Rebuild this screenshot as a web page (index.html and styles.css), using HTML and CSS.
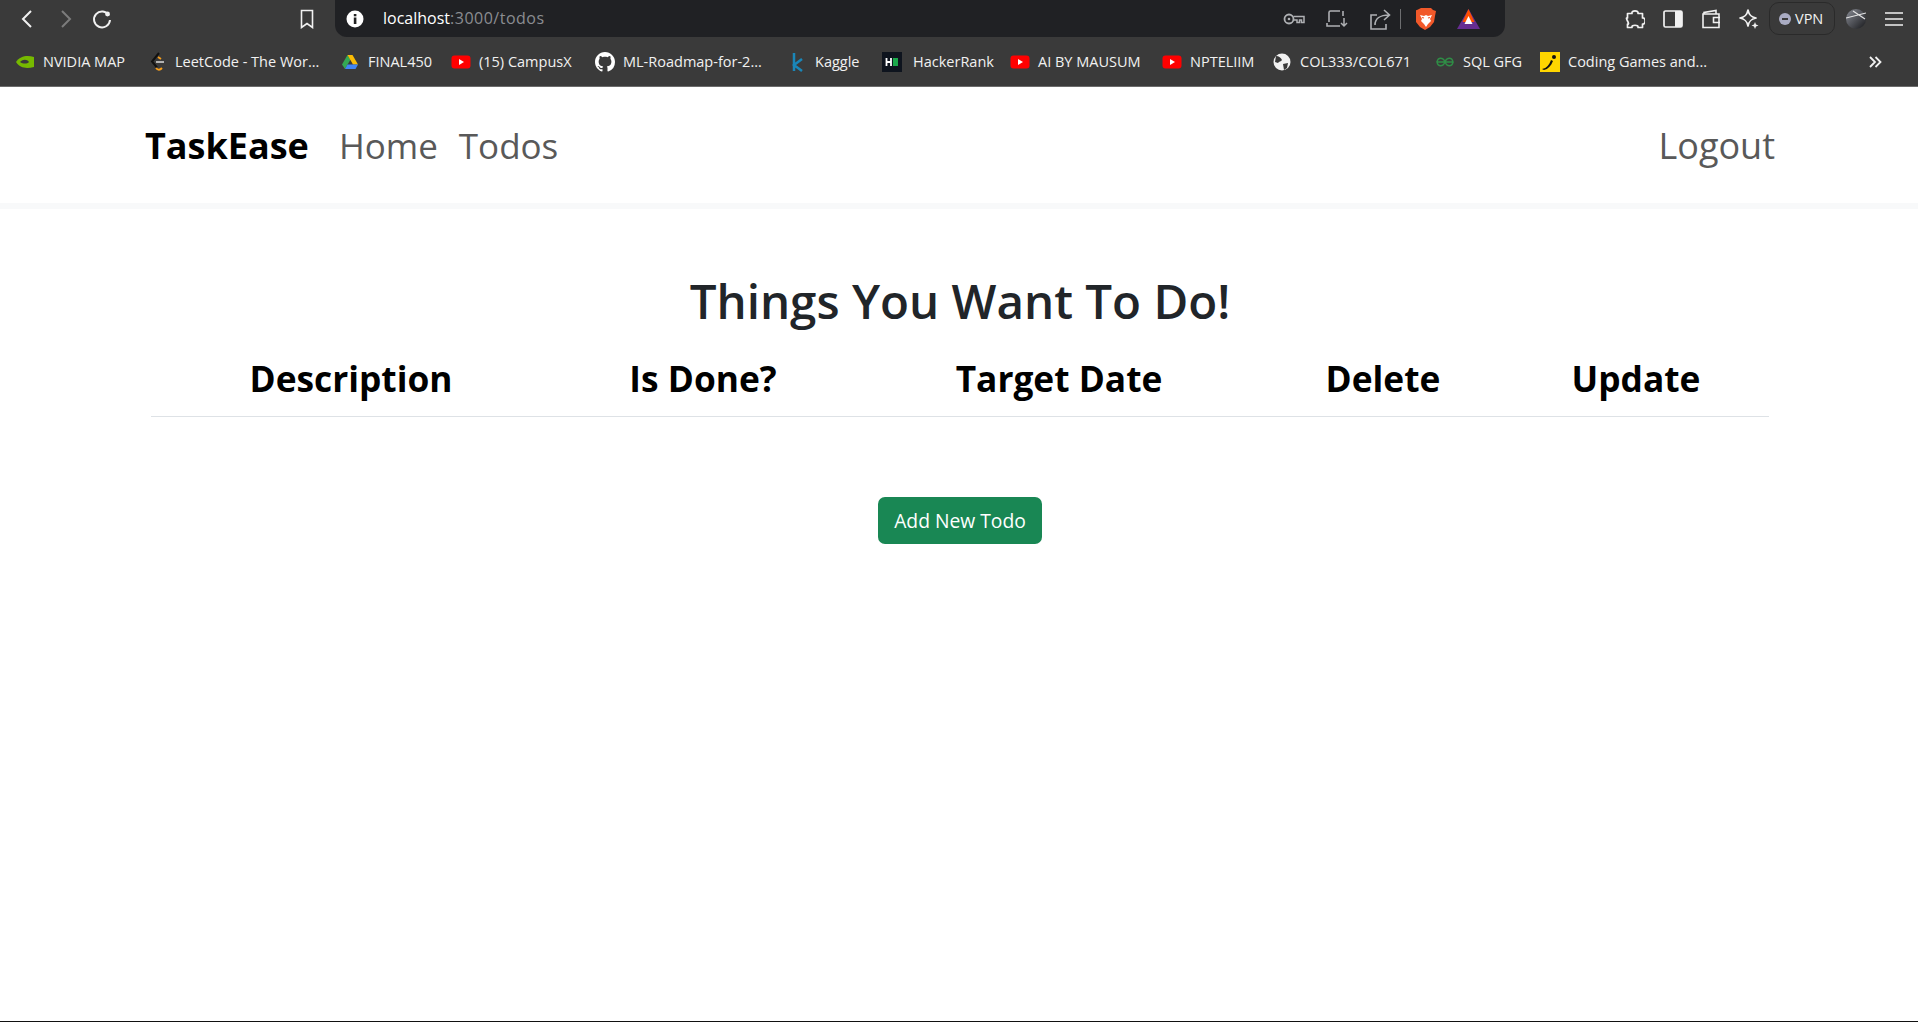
FILE: index.html

```html
<!DOCTYPE html>
<html lang="en">
<head>
    <meta charset="UTF-8">
    <title>TaskEase</title>
    <link rel="stylesheet" href="styles.css">
</head>
<body>
    <div class="browser">
        <div class="toolbar">
            <div class="nav-btns">
                <svg width="22" height="22" viewBox="0 0 22 22"><path d="M14 3 6 11l8 8" fill="none" stroke="#f1f1f1" stroke-width="2"/></svg>
                <svg width="22" height="22" viewBox="0 0 22 22"><path d="M8 3l8 8-8 8" fill="none" stroke="#7c7c7c" stroke-width="2"/></svg>
                <svg width="22" height="22" viewBox="0 0 22 22"><path d="M18 7.500a8 8 0 1 0 1 4.500" fill="none" stroke="#f1f1f1" stroke-width="2"/><circle cx="16.500" cy="6" r="2.400" fill="#f1f1f1"/></svg>
            </div>
            <svg class="bookmark" width="16" height="20" viewBox="0 0 16 20"><path d="M2.500 1.500h11v17L8 14.500l-5.500 4z" fill="none" stroke="#f1f1f1" stroke-width="1.600"/></svg>
            <div class="urlbar">
                <svg width="18" height="18" viewBox="0 0 18 18"><circle cx="9" cy="9" r="8.500" fill="#fff"/><rect x="7.800" y="7.500" width="2.600" height="6.500" fill="#222"/><rect x="7.800" y="4" width="2.600" height="2.300" fill="#222"/></svg>
                <div class="url">localhost<span class="url-rest">:3000/todos</span></div>
                <div class="url-icons">
                    <svg width="22" height="14" viewBox="0 0 22 14"><circle cx="6" cy="7" r="4.500" fill="none" stroke="#aeb0b3" stroke-width="1.800"/><circle cx="6" cy="7" r="1.300" fill="#aeb0b3"/><path d="M10.500 4.500H21v6h-2.500V8h-2v2.500H14V8h-3.500" fill="none" stroke="#aeb0b3" stroke-width="1.500"/></svg>
                    <svg width="22" height="20" viewBox="0 0 22 20"><path d="M14 2H4.500A1.500 1.500 0 0 0 3 3.500V13" fill="none" stroke="#aeb0b3" stroke-width="1.600"/><path d="M17 2v5M1 14v3h13" fill="none" stroke="#aeb0b3" stroke-width="1.600"/><path d="M18 9v8m-3-3 3 3 3-3" fill="none" stroke="#aeb0b3" stroke-width="1.500"/></svg>
                    <svg width="22" height="22" viewBox="0 0 22 22"><path d="M8 7H2v14h15v-5" fill="none" stroke="#aeb0b3" stroke-width="1.600"/><path d="M6 17c0-6 5-10 14-10m-5-5 5.500 5-5.500 5" fill="none" stroke="#aeb0b3" stroke-width="1.600"/></svg>
                    <span class="url-sep"></span>
                    <svg width="20" height="22" viewBox="0 0 20 22"><path d="M5 0h10l2 2 3 1-1 5-1 6-4 5-5 3-5-3-4-5-1-6-1-5 3-1z" fill="#f1592a"/><path d="M4 7l4 1 2-1 2 1 4-1-2 4 1 2-3 3-2 3-2-3-3-3 1-2z" fill="#fff"/><path d="M6 9.500l2 .5M14 9.500l-2 .5" stroke="#f1592a" stroke-width="1.200"/></svg>
                    <svg width="23" height="20" viewBox="0 0 23 20"><path d="M11.500 0 23 20H0z" fill="#662d91"/><path d="M11.500 0l6 13H5.500z" fill="#ff5000"/><path d="M11.500 7l4 8h-8z" fill="#fff"/></svg>
                </div>
            </div>
            <div class="tool-icons">
                <svg width="20" height="20" viewBox="0 0 20 20"><path d="M7 4.500C6 1 14 1 13 4.500h4.500V9C21 8 21 16 17.500 15v3.500H13c1-3-7-3-6 0H2.500V15c3.500 1-3.500-7 0-6V4.500z" fill="none" stroke="#f1f1f1" stroke-width="1.700" stroke-linejoin="round"/></svg>
                <svg width="20" height="20" viewBox="0 0 20 20"><rect x="1" y="2" width="18" height="16" rx="1.500" fill="none" stroke="#f1f1f1" stroke-width="1.700"/><rect x="12" y="2" width="7" height="16" fill="#f1f1f1"/></svg>
                <svg width="20" height="20" viewBox="0 0 20 20"><path d="M3 5V3.500L15 1.500V5M2 5h16v13.500H2zM19 8.500h-6.500v5H19" fill="none" stroke="#f1f1f1" stroke-width="1.600"/></svg>
                <svg width="20" height="20" viewBox="0 0 20 20"><path d="M9 1c1 5 3 7 8 8-5 1-7 3-8 8-1-5-3-7-8-8 5-1 7-3 8-8z" fill="none" stroke="#f1f1f1" stroke-width="1.700" stroke-linejoin="round"/><path d="M16 13l1 2.500 2.500 1-2.500 1-1 2.500-1-2.500-2.500-1 2.500-1z" fill="#f1f1f1"/></svg>
                <div class="vpn"><span class="vpn-dot"></span>VPN</div>
                <svg class="avatar" width="20" height="20" viewBox="0 0 20 20"><defs><linearGradient id="ball" x1="0" y1="0" x2="1" y2="1"><stop offset="0" stop-color="#8a8d96"/><stop offset="1" stop-color="#17181b"/></linearGradient></defs><circle cx="10" cy="10" r="10" fill="url(#ball)"/><path d="M0 9l20-5M7 2l12 8" stroke="#e4e4e4" stroke-width="1.200" fill="none"/></svg>
                <svg width="20" height="16" viewBox="0 0 20 16"><path d="M1 2h18M1 8h18M1 14h18" stroke="#f1f1f1" stroke-width="1.600"/></svg>
            </div>
        </div>
        <div class="bookmarks">
            <div class="bm">
                <svg width="20" height="14" viewBox="0 0 20 14"><path d="M1 7c4-6 11-7 18-5v10C11 14 5 13 1 7z" fill="#76b900"/><path d="M5 7c3-3 7-3 9 0-2 2-6 2-9 0z" fill="#3a3a3a"/></svg>
                NVIDIA MAP
            </div>
            <div class="bm">
                <svg width="18" height="20" viewBox="0 0 18 20"><path d="M11 1 4 9.500l5 6" fill="none" stroke="#111" stroke-width="2"/><path d="M8 10h8" stroke="#b3b3b3" stroke-width="2"/><path d="M8 16c2 2.500 4 2 6 0M10 5l3 2" fill="none" stroke="#f89f1b" stroke-width="2"/></svg>
                LeetCode - The Wor...
            </div>
            <div class="bm">
                <svg width="18" height="16" viewBox="0 0 18 16"><path d="M6.500 1 1 10.500 4 15 9.500 5.500z" fill="#34a853"/><path d="M6.500 1h5L17 10.500h-5z" fill="#fbbc04"/><path d="M4 15l2.500-4.500H17L14.500 15z" fill="#4285f4"/></svg>
                FINAL450
            </div>
            <div class="bm">
                <svg width="20" height="14" viewBox="0 0 20 14"><rect x="0.500" y="0.500" width="19" height="13" rx="3" fill="#f00"/><path d="M8 4l5 3-5 3z" fill="#fff"/></svg>
                (15) CampusX
            </div>
            <div class="bm">
                <svg width="20" height="20" viewBox="0 0 16 16"><path fill="#fff" d="M8 0C3.580 0 0 3.580 0 8c0 3.540 2.290 6.530 5.470 7.590.4.070.55-.17.55-.38 0-.19-.01-.82-.01-1.490-2.010.37-2.530-.49-2.690-.94-.09-.23-.48-.94-.82-1.130-.28-.15-.68-.52-.01-.53.63-.01 1.080.58 1.230.82.720 1.210 1.870.87 2.330.66.070-.52.280-.87.510-1.070-1.780-.2-3.640-.89-3.640-3.950 0-.87.310-1.590.820-2.150-.08-.2-.36-1.020.08-2.120 0 0 .67-.21 2.200.82.640-.18 1.320-.27 2-.27s1.360.09 2 .27c1.530-1.040 2.200-.82 2.200-.82.440 1.100.16 1.920.08 2.120.51.560.82 1.270.82 2.150 0 3.070-1.870 3.750-3.650 3.950.29.250.54.730.54 1.480 0 1.070-.01 1.930-.01 2.200 0 .21.150.46.550.38A8.010 8.010 0 0 0 16 8c0-4.420-3.580-8-8-8z"/></svg>
                ML-Roadmap-for-2...
            </div>
            <div class="bm">
                <svg width="16" height="20" viewBox="0 0 16 20"><path d="M5 1v18M13 7 5 13l8 6" fill="none" stroke="#1a86b8" stroke-width="2.500"/></svg>
                Kaggle
            </div>
            <div class="bm bm-hr">
                <svg width="20" height="20" viewBox="0 0 20 20"><rect width="20" height="20" fill="#0e141e"/><path d="M4.500 6v8M9 6v8M4.500 10H9" stroke="#fff" stroke-width="1.800"/><rect x="11" y="6" width="5" height="8" fill="#1ba94c"/></svg>
                HackerRank
            </div>
            <div class="bm">
                <svg width="20" height="14" viewBox="0 0 20 14"><rect x="0.500" y="0.500" width="19" height="13" rx="3" fill="#f00"/><path d="M8 4l5 3-5 3z" fill="#fff"/></svg>
                AI BY MAUSUM
            </div>
            <div class="bm">
                <svg width="20" height="14" viewBox="0 0 20 14"><rect x="0.500" y="0.500" width="19" height="13" rx="3" fill="#f00"/><path d="M8 4l5 3-5 3z" fill="#fff"/></svg>
                NPTELIIM
            </div>
            <div class="bm">
                <svg width="18" height="18" viewBox="0 0 18 18"><circle cx="9" cy="9" r="8.500" fill="#f1f1f1"/><path d="M3 3c3 0 5 2 6 4-1 2-3 1-4 3L2 9zM10 11l5-1-1 5-3 2z" fill="#3a3a3a"/></svg>
                COL333/COL671
            </div>
            <div class="bm">
                <svg width="18" height="12" viewBox="0 0 18 12"><path d="M9 6h8C16 1 11 1 9 6c-2 5-7 5-8 0h8M9 6c2 5 7 5 8 0M9 6C7 1 2 1 1 6" fill="none" stroke="#2f8d46" stroke-width="1.400"/></svg>
                SQL GFG
            </div>
            <div class="bm">
                <svg width="20" height="20" viewBox="0 0 20 20"><rect width="20" height="20" fill="#ffd600"/><path d="M2 17c5-1 7-4 9-9l2 1c-2 5-5 8-9 9z" fill="#111"/><circle cx="14" cy="5" r="2" fill="#111"/></svg>
                Coding Games and...
            </div>
            <svg class="more" width="14" height="12" viewBox="0 0 14 12"><path d="M2 1l5 5-5 5M7.500 1l5 5-5 5" fill="none" stroke="#f1f1f1" stroke-width="1.800"/></svg>
        </div>
    </div>

    <nav class="navbar">
        <a class="brand" href="#">TaskEase</a>
        <a class="nav-link" href="#">Home</a>
        <a class="nav-link" href="#">Todos</a>
        <a class="nav-link logout" href="#">Logout</a>
    </nav>

    <div class="container">
        <h1>Things You Want To Do!</h1>
        <table class="todos">
            <thead>
                <tr>
                    <th class="col-desc">Description</th>
                    <th class="col-done">Is Done?</th>
                    <th class="col-date">Target Date</th>
                    <th class="col-del">Delete</th>
                    <th class="col-upd">Update</th>
                </tr>
            </thead>
        </table>
        <a class="btn-add" href="#">Add New Todo</a>
    </div>
</body>
</html>
```

FILE: styles.css

```css
* {
    box-sizing: border-box;
}
html, body {
    height: 100%;
}
body {
    margin: 0;
    background-color: #fff;
    font-family: "Open Sans", "Noto Sans", sans-serif;
    color: #212529;
    border-bottom: 1px solid #111;
    overflow: hidden;
}
a {
    text-decoration: none;
}

/* browser chrome */
.browser {
    background-color: #3a3a3a;
    border-bottom: 1px solid #6b6b6b;
    height: 87px;
    color: #f1f1f1;
}
.toolbar {
    display: flex;
    align-items: center;
    height: 37px;
}
.nav-btns {
    display: flex;
    align-items: center;
    gap: 15px;
    padding-left: 17px;
    width: 299px;
}
.bookmark {
    margin-right: 20px;
}
.urlbar {
    display: flex;
    align-items: center;
    width: 1170px;
    height: 37px;
    padding-left: 11px;
    background-color: #202124;
    border-radius: 0 0 12px 12px;
}
.url {
    margin-left: 19px;
    margin-top: -1px;
    font-size: 16px;
    color: #fff;
}
.url-rest {
    color: #8b8d91;
    letter-spacing: 0.5px;
}
.url-icons {
    display: flex;
    align-items: center;
    gap: 21px;
    margin-left: auto;
    padding-right: 25px;
}
.url-sep {
    width: 1px;
    height: 20px;
    margin: 0 -6px 0 -12px;
    background-color: #6d6e70;
}
.tool-icons {
    display: flex;
    align-items: center;
    gap: 18px;
    margin-left: 120px;
}
.vpn {
    display: flex;
    align-items: center;
    gap: 4px;
    height: 33px;
    width: 66px;
    padding-left: 9px;
    margin: 0 -7px 0 -8px;
    font-size: 14.500px;
    border: 1px solid #2a2a2a;
    border-radius: 10px;
}
.vpn-dot {
    position: relative;
    width: 12px;
    height: 12px;
    border-radius: 50%;
    background-color: #a9abc2;
}
.vpn-dot::after {
    content: "";
    position: absolute;
    left: 3px;
    top: 5px;
    width: 6px;
    height: 2px;
    background-color: #3a3a3a;
}
.bookmarks {
    display: grid;
    grid-template-columns: 132px 193px 111px 144px 192px 95px 128px 152px 110px 163px 105px 328px auto;
    align-items: center;
    height: 49px;
    padding-left: 15px;
    font-size: 14.500px;
}
.bm {
    display: flex;
    align-items: center;
    gap: 8px;
    white-space: nowrap;
}
.bm svg {
    width: 20px;
    flex: none;
}
.bm-hr {
    gap: 11px;
}

/* page */
.navbar {
    display: flex;
    align-items: center;
    height: 122px;
    padding: 1px 143px 0 145px;
    background-color: #fff;
    border-bottom: 6px solid #f8f9fa;
}
.brand {
    margin-right: 30px;
    font-size: 36px;
    font-weight: 700;
    color: #000;
}
.nav-link {
    margin-right: 21px;
    font-size: 35px;
    color: #595959;
}
.logout {
    margin-left: auto;
    margin-right: 0;
    font-size: 36px;
}
.container {
    display: flex;
    flex-direction: column;
    align-items: center;
    padding: 0 149px 0 151px;
}
h1 {
    margin: 59px 0 0;
    font-size: 47.500px;
    font-weight: 600;
    line-height: 66px;
}
.todos {
    width: 1618px;
    margin-top: 7px;
    border-collapse: collapse;
    table-layout: fixed;
}
.todos th {
    height: 75px;
    font-size: 35.300px;
    font-weight: 700;
    color: #000;
    text-align: center;
    border-bottom: 1px solid #dee2e6;
}
.col-desc { width: 400px; }
.col-done { width: 304px; }
.col-date { width: 408px; }
.col-del { width: 240px; }
.col-upd { width: 266px; }

.btn-add {
    display: block;
    width: 164px;
    margin-top: 80px;
    height: 47px;
    line-height: 47px;
    font-size: 19.300px;
    text-align: center;
    color: #fff;
    background-color: #198754;
    border-radius: 7px;
}
```
